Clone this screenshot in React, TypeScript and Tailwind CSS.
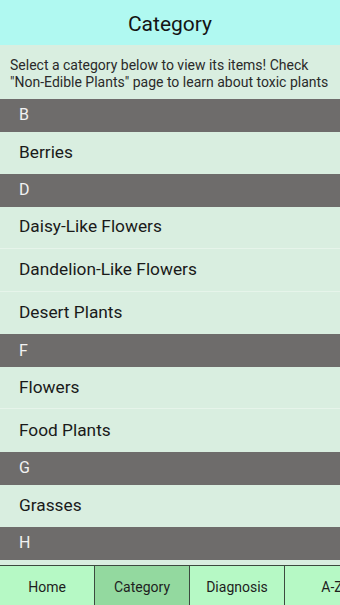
import React from 'react';

const sections: { letter: string; items: string[] }[] = [
  { letter: 'B', items: ['Berries'] },
  { letter: 'D', items: ['Daisy-Like Flowers', 'Dandelion-Like Flowers', 'Desert Plants'] },
  { letter: 'F', items: ['Flowers', 'Food Plants'] },
  { letter: 'G', items: ['Grasses'] },
  { letter: 'H', items: ['Herbs', 'Houseplants'] },
];

const tabs = ['Home', 'Category', 'Diagnosis', 'A-Z'];

const App: React.FC = () => {
  return (
    <div
      className="w-[340px] h-[605px] flex flex-col overflow-hidden bg-[#d9eee0]"
      style={{ fontFamily: 'Roboto, "Noto Sans", sans-serif' }}
    >
      {/* Title bar */}
      <div className="h-[45px] shrink-0 bg-[#b0f9f1] flex items-center justify-center pt-[3px]">
        <h1 className="text-[21px] text-[#141414] leading-none">Category</h1>
      </div>

      {/* Description */}
      <div className="h-[54px] shrink-0 px-[10px] pt-[12px] text-[14px] leading-[16.5px] text-[#2a2a2a]">
        Select a category below to view its items! Check "Non-Edible Plants" page to learn about toxic plants
      </div>

      {/* Category list */}
      <div className="flex-1 overflow-hidden">
        {sections.map((s) => (
          <div key={s.letter}>
            <div className="h-[32.5px] bg-[#6e6c6b] flex items-center pl-[19px] text-[16px] text-[#f2f2f2]">
              {s.letter}
            </div>
            {s.items.map((item, i) => (
              <div
                key={item}
                className={`h-[42.6px] flex items-center pl-[19px] text-[17.3px] text-[#1a1a1a] ${
                  i < s.items.length - 1 ? 'border-b border-[#e6f4ea]' : ''
                }`}
              >
                {item}
              </div>
            ))}
          </div>
        ))}
      </div>

      {/* Bottom tabs */}
      <div className="h-[40px] shrink-0 flex overflow-hidden border-t border-[#3c4a3f] bg-[#b6f9c5]">
        {tabs.map((t) => (
          <div
            key={t}
            className={`w-[95px] shrink-0 flex items-center justify-center pt-[3px] text-[14px] text-[#1e1e1e] border-r border-[#3c4a3f] ${
              t === 'Category' ? 'bg-[#93d99f]' : ''
            }`}
          >
            {t}
          </div>
        ))}
      </div>
    </div>
  );
};

export default App;
